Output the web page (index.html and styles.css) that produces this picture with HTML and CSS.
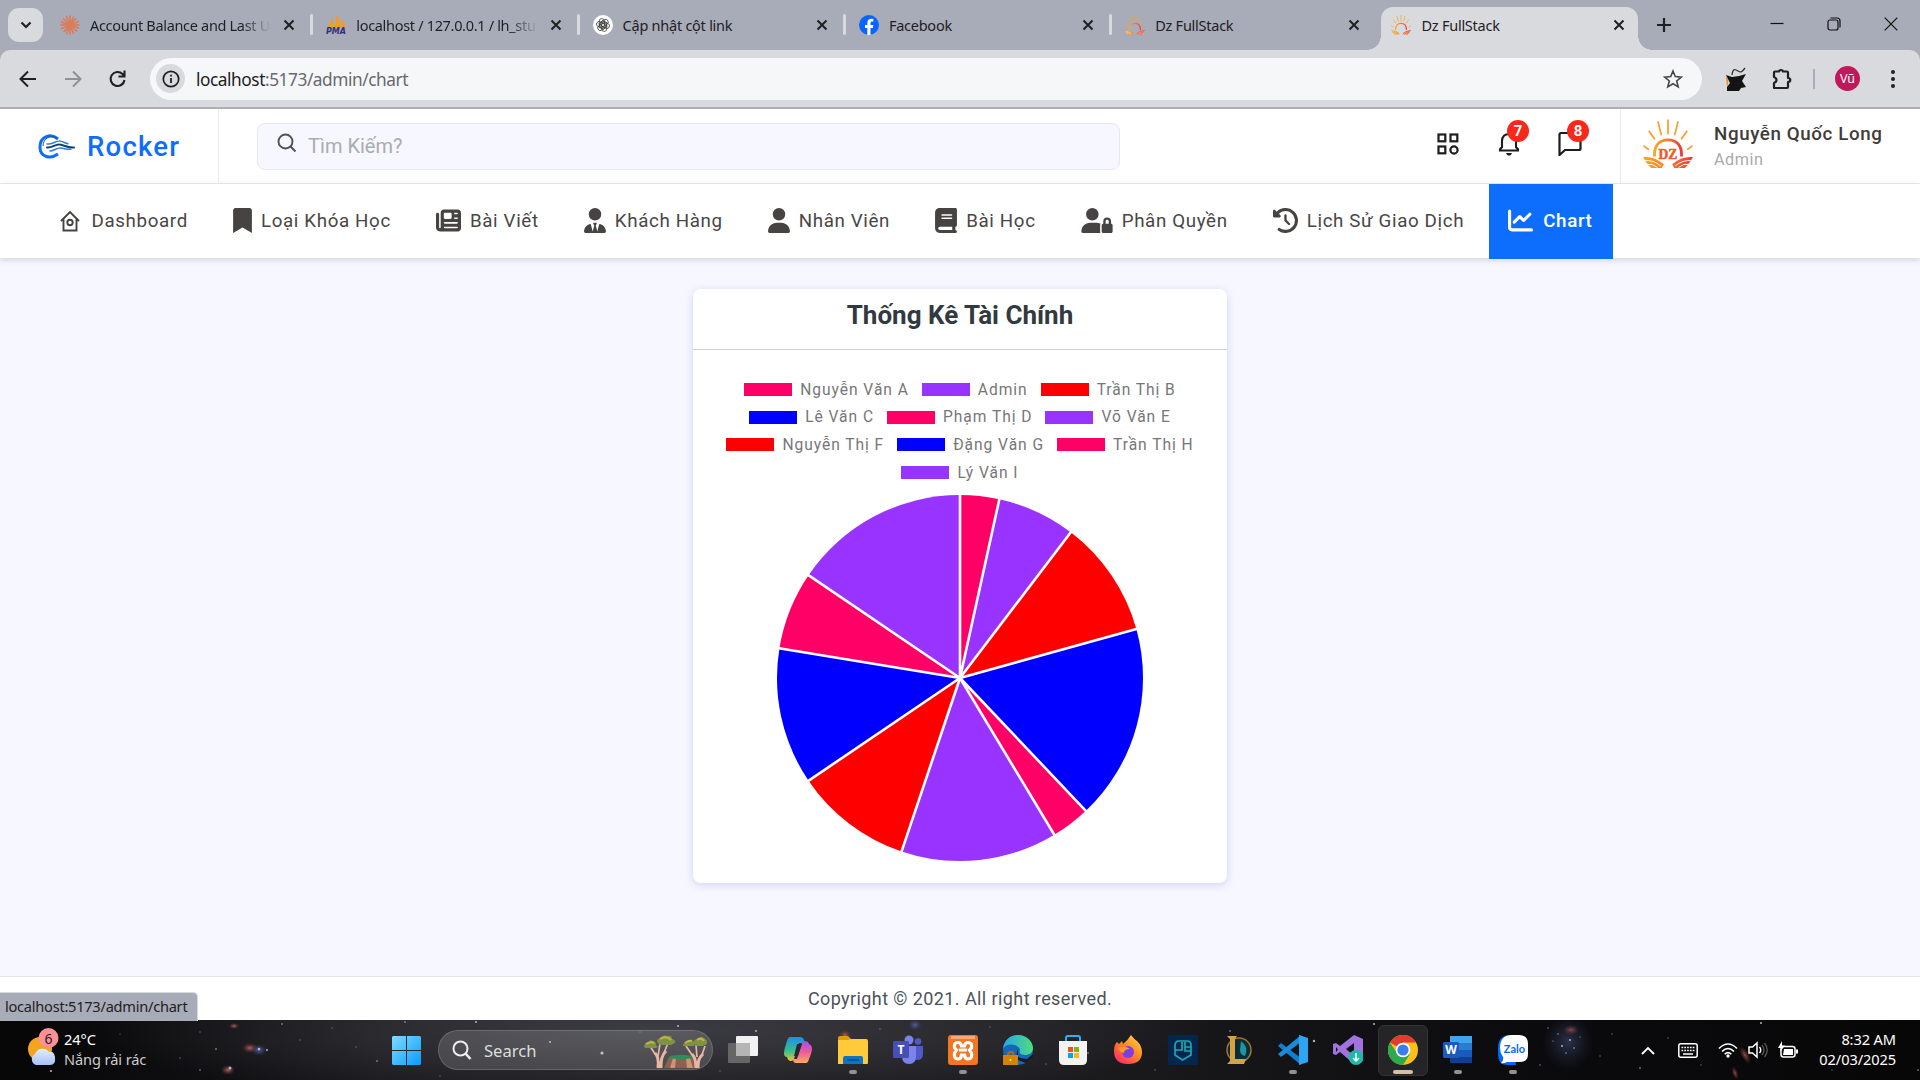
FILE: index.html
```html
<!DOCTYPE html>
<html lang="vi">
<head>
<meta charset="utf-8">
<title>Dz FullStack</title>
<link rel="stylesheet" href="styles.css">
</head>
<body>
<svg class="defs" width="0" height="0" aria-hidden="true">
  <defs>
    <linearGradient id="sunrise" x1="0" x2="1"><stop offset="0" stop-color="#fba628"/><stop offset=".5" stop-color="#f57a2c"/><stop offset="1" stop-color="#ee3a3a"/></linearGradient>
    <symbol id="x" viewBox="0 0 12 12"><path d="M1.5 1.5l9 9M10.5 1.5l-9 9" fill="none" stroke="#1f2023" stroke-width="2"/></symbol>
    <symbol id="dz" viewBox="0 0 48 48">
      <g fill="none" stroke="#f9a02c" stroke-width="1.7" stroke-linecap="round"><path d="M24 1v13M14.500 3l3 12M33.500 3l-3 12M6 12l5 7M42 12l-5 7M1 26l4 3M47 26l-4 3"/></g>
      <path d="M11 36C10.500 25 16 20 24 20S37.500 25 37 36" fill="none" stroke="url(#sunrise)" stroke-width="2.800"/>
      <path d="M0 36.500q11-1 20 7l-2 3.500H8q-4-3-8-10.500zM48 36.500q-11-1-20 7l2 3.500h10q4-3 8-10.500z" fill="url(#sunrise)"/>
      <path d="M1 40q9-1 16 5M3 43.500q6-1 11 3M47 40q-9-1-16 5M45 43.500q-6-1-11 3" fill="none" stroke="#fff" stroke-width=".9"/>
    </symbol>
  </defs>
</svg>

<header class="browser">
  <div class="tabs">
    <button class="tab-search"><svg width="12" height="8" viewBox="0 0 12 8"><path d="M1.500 1.500L6 6l4.500-4.500" fill="none" stroke="#1f2023" stroke-width="2.200"/></svg></button>
    <div class="tab">
      <svg class="fav" viewBox="0 0 20 20"><g stroke="#dd7a58" stroke-width="1.600" stroke-linecap="round"><path d="M10 1v18M1 10h18M3.500 4l13 12M16 3.500L4 16.500M6.500 1.500l7 17M13.500 2l-7 16.500M1.500 7l17 6M18.500 6.500l-17 7"/></g></svg>
      <span class="tab-title fade">Account Balance and Last U</span><svg class="close"><use href="#x"/></svg>
    </div>
    <div class="tab">
      <svg class="fav" viewBox="0 0 20 20"><path d="M2 12Q5 8 6 2q2 6 1 10zM8 12q3-6 2-13 5 6 4 13zM15 12q1-5 0-9 4 5 4 9z" fill="#f59a23"/><text x="0" y="18.500" class="pma">PMA</text></svg>
      <span class="tab-title fade">localhost / 127.0.0.1 / lh_stu</span><svg class="close"><use href="#x"/></svg>
    </div>
    <div class="tab">
      <svg class="fav" viewBox="0 0 20 20"><circle cx="10" cy="10" r="10" fill="#fff"/><g fill="none" stroke="#333" stroke-width=".75"><rect id="k" x="6.200" y="3.600" width="5.200" height="9.500" rx="2.600"/><use href="#k" transform="rotate(60 10 10)"/><use href="#k" transform="rotate(120 10 10)"/><use href="#k" transform="rotate(180 10 10)"/><use href="#k" transform="rotate(240 10 10)"/><use href="#k" transform="rotate(300 10 10)"/></g></svg>
      <span class="tab-title">Cập nhật cột link</span><svg class="close"><use href="#x"/></svg>
    </div>
    <div class="tab">
      <svg class="fav" viewBox="0 0 20 20"><circle cx="10" cy="10" r="10" fill="#0866ff"/><path d="M8.300 20v-7H6v-3h2.300V8.300c0-3.200 1.700-4.600 4.200-4.600l1.900.2v2.700h-1.300c-1.200 0-1.600.6-1.600 1.600V10h2.800l-.5 3h-2.300v7z" fill="#fff"/></svg>
      <span class="tab-title">Facebook</span><svg class="close"><use href="#x"/></svg>
    </div>
    <div class="tab last">
      <svg class="fav"><use href="#dz"/></svg>
      <span class="tab-title">Dz FullStack</span><svg class="close"><use href="#x"/></svg>
    </div>
    <div class="tab active">
      <svg class="fav"><use href="#dz"/></svg>
      <span class="tab-title">Dz FullStack</span><svg class="close"><use href="#x"/></svg>
    </div>
    <svg class="new-tab" width="14" height="14" viewBox="0 0 14 14"><path d="M7 0v14M0 7h14" stroke="#1f2023" stroke-width="2.200"/></svg>
    <div class="win-controls">
      <svg width="14" height="14" viewBox="0 0 14 14"><path d="M.5 6.500h13" stroke="#111" stroke-width="1.200"/></svg>
      <svg width="14" height="14" viewBox="0 0 14 14"><g fill="none" stroke="#111" stroke-width="1.200"><rect x="1" y="3" width="10" height="10" rx="2"/><path d="M3.500 1h6.500q3 0 3 3v6.500"/></g></svg>
      <svg width="14" height="14" viewBox="0 0 14 14"><path d="M.7.7l12.600 12.600M13.300.7L.7 13.300" stroke="#111" stroke-width="1.200"/></svg>
    </div>
  </div>
  <div class="toolbar">
    <svg class="tb" viewBox="0 0 20 20"><path d="M18 10H3M10 2.500L2.500 10l7.500 7.500" fill="none" stroke="#1f2023" stroke-width="2"/></svg>
    <svg class="tb" viewBox="0 0 20 20"><path d="M2 10h15M10 2.500l7.500 7.500-7.500 7.500" fill="none" stroke="#909196" stroke-width="2"/></svg>
    <svg class="tb" viewBox="0 0 20 20"><path d="M16.500 11a7 7 0 1 1-2-6l2 2M16.500 1.500v6h-6" fill="none" stroke="#1f2023" stroke-width="2.100"/></svg>
    <div class="omnibox">
      <span class="info"><svg width="18" height="18" viewBox="0 0 18 18"><circle cx="9" cy="9" r="7.700" fill="none" stroke="#1f2023" stroke-width="1.700"/><path d="M9 8v5M9 4.800v1.800" stroke="#1f2023" stroke-width="1.800"/></svg></span>
      <span class="url"><b>localhost</b>:5173/admin/chart</span>
      <svg class="star" width="20" height="20" viewBox="0 0 20 20"><path d="M10 2l2.300 5.600 6 .5-4.600 3.900 1.500 5.900-5.200-3.200-5.200 3.200L6.300 12 1.700 8.100l6-.5z" fill="none" stroke="#44474c" stroke-width="1.600"/></svg>
    </div>
    <svg class="ext-cat" width="24" height="26" viewBox="0 0 24 26"><path d="M2 10q4 4 1 11z" fill="#f08a1d"/><path d="M2 9l6 2 7-1 7-2-4 7 4 6-5 1-2 3H3v-4l3-4z" fill="#141414"/><path d="M8 9c1-7 3-6 6-4s4 1 7-3" fill="none" stroke="#333" stroke-width="1.300"/></svg>
    <svg class="ext" width="22" height="22" viewBox="0 0 22 22"><path d="M3 4.500q0-1 1-1h4q.3-1.500 2-1.500t2 1.500h4q1 0 1 1V10q2.300.2 2.300 2T17 14v5q0 1-1 1H3v-5q2.500-1 2.500-3T3 9z" fill="none" stroke="#1f2023" stroke-width="2.200" stroke-linejoin="round"/></svg>
    <i class="tb-sep"></i>
    <span class="profile">Vũ</span>
    <svg class="kebab" width="4" height="18" viewBox="0 0 4 18"><g fill="#1f2023"><circle cx="2" cy="2" r="2"/><circle cx="2" cy="9" r="2"/><circle cx="2" cy="16" r="2"/></g></svg>
  </div>
</header>

<main class="page">
  <div class="topbar">
    <div class="brand">
      <svg width="38" height="26" viewBox="0 0 38 26"><path d="M20 6C13 0 2 3 2 14s11 12 18 7" fill="none" stroke="#0d6efd" stroke-width="3"/><path d="M19 5C12 1 5 6 5 13" fill="none" stroke="#1c4f96" stroke-width="1"/><g fill="none" stroke-linecap="round"><path d="M9 11c5 1 8-3 12-3 4-.3 6 2.500 9 2.800" stroke="#3b7fd0" stroke-width="1.500"/><path d="M9 14.500c5 .5 8-3 12-3s8 3.500 15 3" stroke="#16406f" stroke-width="2"/><path d="M12 18c4 0 6-3 10-3s7 2 11 1" stroke="#2a7fe8" stroke-width="1.600"/></g></svg>
      <span>Rocker</span>
    </div>
    <div class="search">
      <svg width="20" height="20" viewBox="0 0 20 20"><circle cx="8.500" cy="8.500" r="7" fill="none" stroke="#4c5258" stroke-width="1.900"/><path d="M13.500 13.500l5 5" stroke="#4c5258" stroke-width="2"/></svg>
      <span>Tìm Kiếm?</span>
    </div>
    <div class="actions">
      <svg width="22" height="22" viewBox="0 0 22 22"><g fill="none" stroke="#1d1d1f" stroke-width="2.200"><rect x="1.500" y="1.500" width="6.800" height="6.800"/><rect x="13.500" y="1.500" width="6.800" height="6.800"/><rect x="1.500" y="13.500" width="6.800" height="6.800"/><circle cx="17" cy="17" r="3.600"/></g></svg>
      <div class="notify"><svg width="22" height="25" viewBox="0 0 22 25"><path d="M2 19.500v-1.300l2-2.200V10c0-4.500 3-7 7-7s7 2.500 7 7v6l2 2.200v1.300z" fill="none" stroke="#1d1d1f" stroke-width="2.100"/><path d="M8 22h6q-.7 2.700-3 2.700T8 22z" fill="#1d1d1f"/></svg><span class="badge">7</span></div>
      <div class="notify"><svg width="24" height="25" viewBox="0 0 24 25"><path d="M1.500 24V3.500q0-1.500 1.500-1.500h18q1.500 0 1.500 1.500v14q0 1.500-1.500 1.500H7z" fill="none" stroke="#1d1d1f" stroke-width="2.200"/></svg><span class="badge">8</span></div>
    </div>
    <div class="user">
      <div class="avatar"><svg width="50" height="50" viewBox="0 0 48 48"><use href="#dz"/><text x="24" y="38.500" class="dz-text">DZ</text></svg></div>
      <div><p class="name">Nguyễn Quốc Long</p><p class="role">Admin</p></div>
    </div>
  </div>

  <nav class="menu">
    <a class="home"><svg width="20" height="22" viewBox="0 0 20 22"><g fill="none" stroke="#474343" stroke-width="1.900"><path d="M1 11l9-9 9 9M3.500 9v11.500h13V9"/><circle cx="10" cy="12.500" r="2.700"/></g></svg>Dashboard</a>
    <a><svg width="19" height="25" viewBox="0 0 384 512"><path d="M0 48v464l192-112 192 112V48c0-26-22-48-48-48H48C22 0 0 22 0 48z"/></svg>Loại Khóa Học</a>
    <a><svg width="25" height="25" viewBox="0 0 512 512"><path d="M96 96c0-35 29-64 64-64h288c35 0 64 29 64 64v320c0 35-29 64-64 64H80c-44 0-80-36-80-80V128c0-18 14-32 32-32s32 14 32 32v272c0 9 7 16 16 16s16-7 16-16zm64 24v80c0 13 11 24 24 24h112c13 0 24-11 24-24v-80c0-13-11-24-24-24H184c-13 0-24 11-24 24zm208-8c0 9 7 16 16 16h48a16 16 0 0 0 0-32h-48c-9 0-16 7-16 16zm0 96c0 9 7 16 16 16h48a16 16 0 0 0 0-32h-48c-9 0-16 7-16 16zM160 304c0 9 7 16 16 16h256a16 16 0 0 0 0-32H176c-9 0-16 7-16 16zm0 96c0 9 7 16 16 16h256a16 16 0 0 0 0-32H176c-9 0-16 7-16 16z" fill-rule="evenodd"/></svg>Bài Viết</a>
    <a><svg width="22" height="25" viewBox="0 0 448 512"><path d="M96 128a128 128 0 1 0 256 0 128 128 0 1 0-256 0zM209 359l-19-31c-6-11 2-24 14-24h40c12 0 20 13 14 24l-19 31 33 124 36-146c2-8 10-14 18-11 70 17 122 81 122 156 0 17-14 30-30 30H30c-16 0-30-14-30-30 0-75 52-139 122-156 8-2 16 3 18 11l36 146z"/></svg>Khách Hàng</a>
    <a><svg width="22" height="25" viewBox="0 0 448 512"><path d="M224 256a128 128 0 1 0 0-256 128 128 0 1 0 0 256zm-46 48C80 304 0 384 0 482c0 16 14 30 30 30h388c16 0 30-14 30-30 0-98-80-178-178-178z"/></svg>Nhân Viên</a>
    <a><svg width="22" height="25" viewBox="0 0 448 512"><path d="M96 0C43 0 0 43 0 96v320c0 53 43 96 96 96h320a32 32 0 0 0 0-64v-64c18 0 32-14 32-32V32c0-18-14-32-32-32zm0 384h256v64H96a32 32 0 0 1 0-64zm32-240c0-9 7-16 16-16h192a16 16 0 0 1 0 32H144c-9 0-16-7-16-16zm16 48h192a16 16 0 0 1 0 32H144a16 16 0 0 1 0-32z" fill-rule="evenodd"/></svg>Bài Học</a>
    <a><svg width="32" height="25" viewBox="0 0 640 512"><path d="M224 256a128 128 0 1 0 0-256 128 128 0 1 0 0 256zm-46 48C80 304 0 384 0 482c0 16 14 30 30 30h362c-5-9-8-20-8-32V352c0-18 8-28 10-30-32-12-64-18-124-18zM528 240c18 0 32 14 32 32v48h-64v-48c0-18 14-32 32-32zm-80 32v48c-18 0-32 14-32 32v128c0 18 14 32 32 32h160c18 0 32-14 32-32V352c0-18-14-32-32-32v-48a80 80 0 0 0-160 0z"/></svg>Phân Quyền</a>
    <a><svg width="25" height="25" viewBox="0 0 512 512"><path d="M75 75L41 41C26 26 0 36 0 58v110c0 13 11 24 24 24h110c22 0 32-26 17-41l-30-31a192 192 0 1 1 26 293 32 32 0 1 0-37 53A256 256 0 1 0 75 75zm181 53c-13 0-24 11-24 24v104c0 6 3 13 7 17l72 72a24 24 0 0 0 34-34l-65-65v-94c0-13-11-24-24-24z"/></svg>Lịch Sử Giao Dịch</a>
    <a class="on"><svg width="25" height="25" viewBox="0 0 512 512"><path d="M64 64a32 32 0 1 0-64 0v336c0 44 36 80 80 80h400a32 32 0 1 0 0-64H80c-9 0-16-7-16-16zm407 87a32 32 0 0 0-46-46L320 211l-57-58a32 32 0 0 0-46 0L105 265a32 32 0 0 0 46 46l89-90 57 58c13 12 33 12 46 0z"/></svg>Chart</a>
  </nav>

  <section class="content">
    <article class="card">
      <h1>Thống Kê Tài Chính</h1>
      <div class="chart">
        <ul class="legend">
          <li class="pink">Nguyễn Văn A</li><li class="purple">Admin</li><li class="red">Trần Thị B</li>
        </ul>
        <ul class="legend">
          <li class="blue">Lê Văn C</li><li class="pink">Phạm Thị D</li><li class="purple">Võ Văn E</li>
        </ul>
        <ul class="legend">
          <li class="red">Nguyễn Thị F</li><li class="blue">Đặng Văn G</li><li class="pink">Trần Thị H</li>
        </ul>
        <ul class="legend">
          <li class="purple">Lý Văn I</li>
        </ul>
        <svg class="pie" width="370" height="370" viewBox="-185 -185 370 370">
          <g transform="rotate(-90)">
            <path fill="#ff0066" d="M0 0L183 0A183 183 0 0 1 178.720 39.330z"/>
            <path fill="#9933ff" d="M0 0L178.720 39.330A183 183 0 0 1 145.690 110.740z"/>
            <path fill="#ff0000" d="M0 0L145.690 110.740A183 183 0 0 1 48.970 176.330z"/>
            <path fill="#0000ff" d="M0 0L48.970 176.330A183 183 0 0 1 -132.850 125.850z"/>
            <path fill="#ff0066" d="M0 0L-132.850 125.850A183 183 0 0 1 -156.810 94.330z"/>
            <path fill="#9933ff" d="M0 0L-156.810 94.330A183 183 0 0 1 -173.420 -58.430z"/>
            <path fill="#ff0000" d="M0 0L-173.420 -58.430A183 183 0 0 1 -102.700 -151.460z"/>
            <path fill="#0000ff" d="M0 0L-102.700 -151.460A183 183 0 0 1 29.610 -180.590z"/>
            <path fill="#ff0066" d="M0 0L29.610 -180.590A183 183 0 0 1 102.700 -151.460z"/>
            <path fill="#9933ff" d="M0 0L102.700 -151.460A183 183 0 0 1 183 0z"/>
            <g stroke="#fff" stroke-width="2.600">
              <path d="M0 0H185"/><path d="M0 0H185" transform="rotate(12.410)"/><path d="M0 0H185" transform="rotate(37.240)"/><path d="M0 0H185" transform="rotate(74.480)"/><path d="M0 0H185" transform="rotate(136.550)"/><path d="M0 0H185" transform="rotate(148.970)"/><path d="M0 0H185" transform="rotate(198.620)"/><path d="M0 0H185" transform="rotate(235.860)"/><path d="M0 0H185" transform="rotate(279.310)"/><path d="M0 0H185" transform="rotate(304.140)"/>
            </g>
          </g>
        </svg>
      </div>
    </article>
  </section>
  <footer class="footer">Copyright © 2021. All right reserved.</footer>
  <div class="status">localhost:5173/admin/chart</div>
</main>

<div class="taskbar">
  <svg class="sky" width="1920" height="60" viewBox="0 0 1920 60">
    <defs>
      <radialGradient id="haze"><stop offset="0" stop-color="#46464e"/><stop offset="1" stop-color="#46464e" stop-opacity="0"/></radialGradient>
      <radialGradient id="neb"><stop offset="0" stop-color="#56609a"/><stop offset="1" stop-color="#303660" stop-opacity="0"/></radialGradient>
      <radialGradient id="rose"><stop offset="0" stop-color="#a8625f"/><stop offset="1" stop-color="#803030" stop-opacity="0"/></radialGradient>
    </defs>
    <ellipse cx="650" cy="10" rx="560" ry="75" fill="url(#haze)" opacity=".8"/>
    <ellipse cx="1568" cy="22" rx="26" ry="28" fill="url(#neb)" opacity=".45"/>
    <ellipse cx="1571" cy="10" rx="8" ry="5" fill="url(#rose)" opacity=".7"/><ellipse cx="1745" cy="35" rx="4" ry="10" fill="url(#rose)" opacity=".8" transform="rotate(-30 1745 35)"/><ellipse cx="1735" cy="53" rx="3" ry="7" fill="url(#rose)" opacity=".8" transform="rotate(-20 1735 53)"/>
    <ellipse cx="250" cy="28" rx="8" ry="5" fill="url(#rose)"/><ellipse cx="228" cy="50" rx="7" ry="5" fill="url(#rose)"/><ellipse cx="234" cy="6" rx="5" ry="3" fill="url(#rose)"/><ellipse cx="259" cy="30" rx="8" ry="6" fill="url(#neb)"/><ellipse cx="845" cy="15" rx="6" ry="5" fill="url(#rose)"/><ellipse cx="915" cy="5" rx="7" ry="6" fill="url(#neb)"/>
    <g fill="#aeb2cc"><circle cx="51" cy="51" r="1"/><circle cx="230" cy="48" r="1.500"/><circle cx="259" cy="29" r="1.300"/><circle cx="267" cy="30" r="1"/><circle cx="282" cy="4" r=".8"/><circle cx="476" cy="2" r="1"/><circle cx="550" cy="22" r="1"/><circle cx="602" cy="33" r="1.600"/><circle cx="678" cy="6" r="1"/><circle cx="756" cy="11" r="1"/><circle cx="377" cy="41" r=".8"/><circle cx="200" cy="50" r=".7"/><circle cx="405" cy="2" r=".8"/><circle cx="1314" cy="21" r="1.200"/><circle cx="1374" cy="4" r="1"/><circle cx="1230" cy="11" r=".8"/><circle cx="1088" cy="33" r=".8"/><circle cx="1562" cy="26" r="1"/><circle cx="1570" cy="20" r="1"/><circle cx="1574" cy="28" r=".8"/><circle cx="1566" cy="33" r=".7"/><circle cx="1558" cy="14" r=".7"/><circle cx="1553" cy="21" r=".6"/><circle cx="1580" cy="17" r=".6"/><circle cx="1761" cy="3" r="1"/><circle cx="1640" cy="48" r=".8"/><circle cx="1918" cy="50" r=".8"/></g>
    <g fill="#6f7390"><circle cx="200" cy="12" r=".7"/><circle cx="216" cy="29" r="1"/><circle cx="300" cy="20" r=".7"/><circle cx="332" cy="8" r=".7"/><circle cx="180" cy="38" r=".7"/><circle cx="120" cy="14" r=".6"/><circle cx="356" cy="27" r=".7"/><circle cx="440" cy="56" r=".7"/><circle cx="505" cy="30" r=".7"/><circle cx="640" cy="12" r=".7"/><circle cx="720" cy="51" r=".7"/><circle cx="880" cy="9" r=".8"/><circle cx="990" cy="7" r=".7"/><circle cx="1046" cy="44" r=".7"/><circle cx="1155" cy="50" r=".7"/><circle cx="1600" cy="36" r=".7"/><circle cx="1540" cy="45" r=".8"/><circle cx="1548" cy="8" r=".8"/><circle cx="1612" cy="14" r=".7"/><circle cx="1668" cy="18" r=".7"/><circle cx="1701" cy="45" r=".7"/><circle cx="1832" cy="50" r=".7"/></g>
  </svg>
  <div class="weather">
    <svg width="32" height="40" viewBox="0 0 32 40"><defs><linearGradient id="cl" y2="1" x2="0"><stop stop-color="#e4ecfd"/><stop offset="1" stop-color="#a6c2f5"/></linearGradient></defs><circle cx="12" cy="21" r="12" fill="#f2a51f"/><path d="M8 37a6 6 0 0 1-1-11 8 8 0 0 1 14-2q5-1 6 5 1 8-5 8z" fill="url(#cl)"/><circle cx="20.500" cy="10" r="10" fill="#ff9096"/><text x="20.500" y="15.500" text-anchor="middle" class="wnum">6</text></svg>
    <p><b>24°C</b><br>Nắng rải rác</p>
  </div>
  <svg class="start" width="29" height="29" viewBox="0 0 29 29"><defs><linearGradient id="win" x2="1" y2="1"><stop stop-color="#7ddcff"/><stop offset="1" stop-color="#0a9bff"/></linearGradient></defs><path d="M1 0h13v14H0V1zM15 0h13l1 1v13H15zM0 15h14v14H1l-1-1zM15 15h14v13l-1 1H15z" fill="url(#win)"/></svg>
  <div class="task-search">
    <svg width="20" height="20" viewBox="0 0 20 20"><circle cx="8.500" cy="8.500" r="7" fill="none" stroke="#eee" stroke-width="2"/><path d="M13.500 13.500l5 5.500" stroke="#eee" stroke-width="2.600"/></svg>
    <span>Search</span>
    <svg class="trees" width="64" height="34" viewBox="0 0 64 34"><path d="M25 22h25l4 11H20z" fill="#8a6252"/><path d="M29 23h3l-1 10h-5zM42 23h4l3 10h-6z" fill="#c99576"/><ellipse cx="37" cy="22" rx="12" ry="2.200" fill="#2f8a5c"/><g fill="none" stroke="#e9b6a4"><path d="M14 33c1-8 0-12-3-15M17 33c0-9 1-13 5-17M52 33c0-8-1-11-4-14M54 33c0-8 1-10 5-14" stroke-width="3"/><path d="M11 19l-5-8M14 22l2-14M20 18l4-10M48 20l-6-9M53 22l-1-12M58 20l3-9" stroke-width="1.700"/></g><g fill="#7f9142"><path d="M0 12q0-4 4-4 2-4 5-2 4 1 3 4 3 2 0 3H2zM13 7q0-4 4-4 2-4 6-2 5-1 5 3 4 1 3 4l-4 2H16zM39 11q0-4 4-4 3-3 6-1 3 2 1 5H41zM50 8q-1-4 4-4 3-4 6-1 4 2 3 6l-4 2h-7z"/></g><path d="M16 4q6-4 11 1M41 8q4-3 7-2M53 5q4-3 7 1M2 9q4-3 8-1" stroke="#c0b44c" stroke-width="2" fill="none"/></svg>
  </div>
  <div class="apps">
    <div class="app"><svg viewBox="0 0 30 30"><rect x="8" y="1" width="22" height="20" rx="1" fill="#f1f1f1"/><rect y="8" width="22" height="20" rx="1" fill="#666"/><path d="M8 8h14v13H8z" fill="#b5b5b5"/></svg></div>
    <div class="app"><svg viewBox="0 0 30 30"><defs><linearGradient id="c1" y2="1" x2="0"><stop stop-color="#1b8ee8"/><stop offset=".6" stop-color="#3cc08a"/><stop offset="1" stop-color="#f2c52c"/></linearGradient><linearGradient id="c2" y2="1" x2="0"><stop stop-color="#a050f0"/><stop offset=".5" stop-color="#ee5a9c"/><stop offset="1" stop-color="#ffab5c"/></linearGradient></defs><path d="M7 2h10q3 0 4 3l1 3h-6l-5 16q-1 2-3 2-3 0-4-4-3 0-3-4 0-3 3-12 1-4 3-4z" fill="url(#c1)"/><path d="M23 28H13q-3 0-3-4h4l5-16q1-2 3-2 3 0 4 3 3 1 3 5 0 3-3 10-1 4-3 4z" fill="url(#c2)"/><path d="M14 9h5l-4 12h-4z" fill="#2b2530"/></svg></div>
    <div class="app run"><svg viewBox="0 0 30 30"><path d="M0 3q0-2 2-2h8l4 4H0z" fill="#e09a13"/><path d="M0 5h10l3-1h15q2 0 2 2v22q0 1-1 1H0z" fill="#ffcb3a"/><path d="M5 29v-6q0-2 2-2h16q2 0 2 2v6z" fill="#0f74c4"/><path d="M9 25h12" stroke="#0a4c8f" stroke-width="1.500"/></svg></div>
    <div class="app"><svg viewBox="0 0 30 30"><circle cx="16" cy="5" r="4.500" fill="#7b83eb"/><circle cx="25" cy="6.500" r="3.300" fill="#5059c9"/><path d="M20 11h10v8q0 6-6 6-4 0-4-4z" fill="#5059c9"/><path d="M9 11h14v10q0 8-7 8t-7-8z" fill="#7b83eb"/><rect y="6" width="16" height="17" rx="1.500" fill="#464eb8"/><text x="8" y="19" class="appletter">T</text></svg></div>
    <div class="app run"><svg viewBox="0 0 30 30"><rect width="30" height="30" rx="3" fill="#f37623"/><path d="M3 1h24v3H3z" fill="#f9a873"/><path d="M10 7.500q3 0 3.500 3.500h3q.5-3.500 3.500-3.500 4.500 0 3.500 5.500l-2 2 2 3q1 6-3.500 6-3 0-3.500-4h-3q-.5 4-3.500 4-4.500 0-3.500-6l2-3-2-2q-1-5.500 3.500-5.500z" fill="#f37623" stroke="#fff" stroke-width="3.200"/><path d="M11 15h8" stroke="#fff" stroke-width="3"/></svg></div>
    <div class="app"><svg viewBox="0 0 30 30"><defs><linearGradient id="ed" x2="1"><stop stop-color="#2aa5e8"/><stop offset="1" stop-color="#4edc7d"/></linearGradient></defs><circle cx="15" cy="15" r="15" fill="#1468b8"/><path d="M0 14C1 5 7 0 15 0c9 0 15 7 15 13 0 5-4 7-8 7-5 0-6-2-5-5 0-5-13-9-17-1z" fill="url(#ed)"/><path d="M15 14q-5 10 9 10l6-5v3l-7 6-8-3z" fill="#171b22"/><rect y="20" width="15" height="10" fill="#d18408"/><path d="M5 20q0-3 3-3t2 3" fill="none" stroke="#b36b06" stroke-width="2"/><circle cx="7.500" cy="25" r="1" fill="#ffe79a"/></svg></div>
    <div class="app"><svg viewBox="0 0 30 30"><path d="M8 7V3q0-2 2-2h10q2 0 2 2v4" fill="none" stroke="#32aef0" stroke-width="2"/><path d="M1 6h28v19q0 5-5 5H6q-5 0-5-5z" fill="#f3f3f3"/><path d="M10 12h5v5h-5z" fill="#f25022"/><path d="M16 12h5v5h-5z" fill="#7fba00"/><path d="M10 18h5v5h-5z" fill="#00a4ef"/><path d="M16 18h5v5h-5z" fill="#ffb900"/></svg></div>
    <div class="app"><svg viewBox="0 0 30 30"><defs><linearGradient id="ff" x1="1" x2=".2" y2="1"><stop stop-color="#ffe14a"/><stop offset=".5" stop-color="#ff8a24"/><stop offset="1" stop-color="#ff2a68"/></linearGradient></defs><path d="M18 0q3 4 6 6 5 5 5 11 0 12-14 12T1 16q0-6 3-9l2 2 3-3 1 3q5-4 8-9z" fill="url(#ff)"/><circle cx="15" cy="17" r="6" fill="#7a3fe0"/><path d="M5 13q7-3 12 1-6 0-6 4-5-1-6-5z" fill="#ff9a2a"/></svg></div>
    <div class="app"><svg viewBox="0 0 30 30"><rect width="30" height="30" fill="#04264c"/><path d="M7 11v9l7.500 5 8.500-5V10q0-4-4-4H11q-4 0-4 5zM7 15h7V7M17 7v9h6M17 12h6" fill="none" stroke="#18aab4" stroke-width="1.700"/></svg></div>
    <div class="app"><svg viewBox="0 0 30 30"><circle cx="16" cy="15" r="12" fill="#0b2d36" stroke="#a3752c" stroke-width="1.500"/><path d="M18 6q8 6 4 15-5-1-5-6z" fill="#1d96a0"/><path d="M4 1h10l-2 3v20h11l-2 5H4l3-3V4z" fill="#d6a247"/></svg></div>
    <div class="app run"><svg viewBox="0 0 30 30"><path d="M0 11l3-3 20 15v7z" fill="#0f7fd0"/><path d="M0 19l3 3L23 7V0z" fill="#1a8ada"/><path d="M21 0l9 3v24l-9 3z" fill="#2fa5f2"/></svg></div>
    <div class="app"><svg viewBox="0 0 30 30"><path d="M21 0l9 4v21l-9 4L7 17l-4 3-3-1V9l3-1 4 3zM3 12v5l2-2.500zm18-4l-8 6 8 7z" fill="#a272df" fill-rule="evenodd"/><circle cx="23" cy="22.500" r="7.500" fill="#1fb8a8"/><path d="M23 18v8m-3-3l3 3 3-3" fill="none" stroke="#fff" stroke-width="1.500"/></svg></div>
    <div class="app run focus"><svg viewBox="0 0 30 30"><circle cx="15" cy="15" r="15" fill="#fbc116"/><path d="M15 15L2 7.500A15 15 0 0 1 28 7.500H15z" fill="#e33b2e"/><path d="M2 7.500A15 15 0 0 0 15 30l7-11-13-1z" fill="#2da94f"/><circle cx="15" cy="15" r="7.300" fill="#fff"/><circle cx="15" cy="15" r="5.600" fill="#3b7ded"/></svg></div>
    <div class="app run"><svg viewBox="0 0 30 30"><path d="M7 1h22v7H7z" fill="#41a5ee"/><path d="M7 8h22v7H7z" fill="#2b7cd3"/><path d="M7 15h22v7H7z" fill="#185abd"/><path d="M7 22h22v6H7z" fill="#103f91"/><rect y="7" width="16" height="16" rx="1.500" fill="#1b5bbf"/><text x="8" y="19" class="appletter">W</text></svg></div>
    <div class="app run"><svg viewBox="0 0 30 30"><path d="M13 0Q0 0 0 13v7q0 10 10 10h8z" fill="#0068ff"/><path d="M14 0h7q9 0 9 9v10q0 8-8 8H9q-4 2-6 1 3-3 2-6Q2 18 2 13 2 0 14 0z" fill="#fff"/><text x="16.500" y="18" class="zalo">Zalo</text></svg></div>
  </div>
  <div class="tray">
    <svg width="14" height="9" viewBox="0 0 14 9"><path d="M1 8l6-6 6 6" fill="none" stroke="#fff" stroke-width="1.900"/></svg>
    <svg width="20" height="15" viewBox="0 0 20 15"><rect x=".8" y=".8" width="18.400" height="13.400" rx="2" fill="none" stroke="#fff" stroke-width="1.500"/><path d="M3.500 4.500h13M3.500 7.500h13" stroke="#fff" stroke-width="1.700" stroke-dasharray="1.700 1.100"/><path d="M5 11h10" stroke="#fff" stroke-width="1.500"/></svg>
    <svg width="20" height="16" viewBox="0 0 20 16"><g fill="none" stroke="#fff" stroke-width="1.600"><path d="M1 6.500q9-9 18 0M4 9.500q6-6 12 0M6.700 12.300q3.300-3.300 6.600 0"/></g><circle cx="10" cy="14" r="1.700" fill="#fff"/></svg>
    <svg width="20" height="18" viewBox="0 0 20 18"><path d="M1 6h3.500L9 2v14l-4.500-4H1z" fill="none" stroke="#fff" stroke-width="1.500"/><path d="M11.500 6q2.500 3 0 6" fill="none" stroke="#fff" stroke-width="1.400"/><path d="M14 4q4 5 0 10M16.500 2q5.500 7 0 14" fill="none" stroke="#555" stroke-width="1.300"/></svg>
    <svg width="20" height="18" viewBox="0 0 20 18"><rect x="3" y="5.500" width="14" height="10.500" rx="2.500" fill="none" stroke="#fff" stroke-width="1.500"/><path d="M6 8h9v6H5z" fill="#fff"/><path d="M18 8.500h2v4h-2zM4 0L0 7h3l-1 4 5-6.500H4z" fill="#fff"/></svg>
    <p class="clock">8:32 AM<br>02/03/2025</p>
  </div>
</div>
</body>
</html>
```
FILE: styles.css
```css
* { box-sizing: border-box; }
body { margin: 0; width: 1920px; height: 1080px; overflow: hidden; display: flex; flex-direction: column; font-family: Roboto, "Noto Sans", sans-serif; color: #4c4c4c; }
p, h1, ul { margin: 0; padding: 0; }
svg { display: block; flex: none; }
.defs { position: absolute; }

.browser { height: 109px; background: #a8abb8; border-bottom: 2px solid #b0adb3; font-family: "Noto Sans", sans-serif; flex: none; }
.tabs { height: 50px; display: flex; align-items: stretch; }
.tab-search { width: 35px; height: 34px; margin: 8px 3px 0 8px; border: 0; border-radius: 11px; background: #d9dade; display: grid; place-items: center; padding: 0; }
.tab { width: 266.3px; display: flex; align-items: center; padding: 0 17px 0 14px; position: relative; }
.tab:not(.last):not(.active)::after { content: ""; position: absolute; right: -1px; top: 14px; width: 3px; height: 21px; border-radius: 2px; background: #d9dade; }
.fav { width: 20px; height: 20px; }
.tab-title { flex: 1; min-width: 0; margin-left: 10px; white-space: nowrap; font-size: 14.5px; letter-spacing: -.25px; color: #1f2023; line-height: 24px; }
.fade { margin-right: 12px; letter-spacing: -.32px; -webkit-mask-image: linear-gradient(90deg, #000 84%, transparent); mask-image: linear-gradient(90deg, #000 84%, transparent); }
.close { width: 12px; height: 12px; }
.pma { font: italic bold 8px "DejaVu Sans", sans-serif; fill: #2f3276; }
.active { width: 257px; margin: 7px 0 0 4px; padding: 0 13px 7px 10px; background: #d9dade; border-radius: 12px 12px 0 0; }
.active::before, .active::after { content: ""; position: absolute; bottom: 0; width: 14px; height: 14px; }
.active::before { left: -14px; background: radial-gradient(circle at 0 0, transparent 13.5px, #d9dade 14px); }
.active::after { right: -14px; background: radial-gradient(circle at 100% 0, transparent 13.5px, #d9dade 14px); }
.new-tab { margin: 18px 0 0 19px; }
.win-controls { margin: 17px 22px 0 auto; display: flex; gap: 43px; }
.toolbar { height: 57px; background: #d9dade; border-radius: 10px 10px 0 0; display: flex; align-items: center; padding-left: 18px; }
.tb { width: 20px; height: 20px; margin-right: 25px; }
.omnibox { width: 1552px; height: 42px; margin-left: -3px; border-radius: 21px; background: #f6f7f9; display: flex; align-items: center; padding: 0 19px 0 6px; }
.info { width: 29px; height: 29px; border-radius: 50%; background: #d9dade; display: grid; place-items: center; }
.url { margin: 1px 0 0 11px; font-size: 17.3px; letter-spacing: -.45px; color: #66696e; }
.url b { font-weight: 400; color: #1f2023; }
.star { margin-left: auto; }
.ext-cat { margin-left: 22px; }
.ext { margin-left: 23px; }
.tb-sep { width: 2px; height: 20px; margin: 0 20px 0 20px; background: #a8abb8; }
.profile { width: 25px; height: 25px; border-radius: 50%; background: #c2185b; color: #fff; font-size: 12.5px; display: grid; place-items: center; }
.kebab { margin-left: 31px; }

.page { flex: 1; background: #f7f7ff; display: flex; flex-direction: column; position: relative; min-height: 0; }
.topbar { height: 75px; background: #fff; border-bottom: 1px solid #ebebee; display: flex; align-items: center; flex: none; }
.brand { width: 219px; height: 100%; border-right: 1px solid #ebebee; display: flex; align-items: center; gap: 11px; padding-left: 38px; color: #0d6efd; font-size: 27.5px; font-weight: 500; letter-spacing: 1.25px; }
.search { width: 863px; height: 47px; margin: 1px 0 0 38px; border: 1px solid #e6e6f5; border-radius: 8px; background: #f7f7ff; display: flex; align-items: center; gap: 11px; padding-left: 19px; font-size: 20px; color: #aaacb0; }
.search svg { margin-top: -7px; }
.search span { margin-top: -1px; }
.actions { display: flex; gap: 38px; align-items: center; margin: -5px 38px 0 auto; }
.actions > svg { margin-right: 1px; }
.notify { position: relative; }
.badge { position: absolute; left: 9px; top: -11px; width: 22px; height: 22px; border-radius: 50%; background: #f8281a; color: #fff; font-size: 15px; font-weight: 700; display: grid; place-items: center; }
.user { width: 300px; height: 100%; border-left: 1px solid #ebebee; display: flex; gap: 21px; padding: 11px 0 0 22px; white-space: nowrap; }
.avatar { margin-top: -1px; }
.name { font-size: 18.75px; font-weight: 500; letter-spacing: .6px; line-height: 26px; margin-top: 1px; color: #413c3a; }
.role { font-size: 16.25px; letter-spacing: .5px; line-height: 26px; color: #aaa; }
.dz-text { font: bold 13px "Liberation Serif", serif; fill: #ee5a2a; stroke: #ee5a2a; stroke-width: .5px; text-anchor: middle; }

.menu { height: 74px; background: #fff; box-shadow: 0 2px 6px rgba(80, 80, 110, .22); display: flex; gap: 7.1px; padding-left: 41px; flex: none; z-index: 1; }
.menu a { display: flex; align-items: center; gap: 9px; padding: 0 19px; font-size: 18.75px; letter-spacing: .63px; color: #4a4645; white-space: nowrap; }
.menu svg { fill: #474343; margin-top: -1px; }
.menu .home { gap: 12px; padding-left: 18.5px; }
.menu .on { height: 75px; padding-bottom: 1px; margin-left: -1px; background: #0d6efd; color: #fff; font-weight: 500; gap: 10px; padding-right: 20px; }
.menu .on svg { fill: #fff; }

.content { flex: 1; display: flex; justify-content: center; align-items: flex-start; padding-top: 31px; }
.card { width: 534px; height: 594px; background: #fff; border-radius: 8px; box-shadow: 0 2px 8px rgba(200, 200, 245, .8); }
.card h1 { height: 61px; border-bottom: 1px solid #cfcfd2; text-align: center; font-size: 26px; font-weight: 700; line-height: 52px; color: #32393f; }
.chart { display: flex; flex-direction: column; align-items: center; padding-top: 26px; }
.legend { list-style: none; display: flex; gap: 13px; height: 27.6px; align-items: center; font-size: 15.6px; letter-spacing: .95px; color: #777; white-space: nowrap; }
.legend li { display: flex; align-items: center; gap: 8px; }
.legend li::before { content: ""; width: 48px; height: 13px; background: currentColor; }
.pink::before { background: #f06 !important; }
.purple::before { background: #93f !important; }
.red::before { background: red !important; }
.blue::before { background: blue !important; }
.pie { margin-top: 6.4px; }
.footer { height: 44px; border-top: 1px solid #e4e4e4; background: #fff; text-align: center; font-size: 18px; letter-spacing: .41px; line-height: 44px; color: #4c5258; flex: none; }
.status { position: absolute; left: 0; bottom: -1px; z-index: 3; width: 198px; height: 29px; padding-left: 5px; border-radius: 0 5px 0 0; background: #a8abb8; font: 14.6px/26px "Noto Sans", sans-serif; letter-spacing: -.25px; color: #1f2023; border: solid #d9dade; border-width: 1px 1px 0 0; }

.taskbar { height: 60px; background: linear-gradient(90deg, #060607, #17171a 20%, #1c1c1f 55%, #0b0b0d 80%, #070708); position: relative; display: flex; align-items: center; color: #fff; font-family: "Noto Sans", sans-serif; flex: none; }
.sky { position: absolute; left: 0; top: 0; }
.taskbar > :not(.sky) { position: relative; }
.weather { display: flex; width: 392px; padding-left: 28px; gap: 4px; }
.weather svg { margin-top: -3px; }
.weather p { font-size: 14.6px; line-height: 20px; color: #ccc; letter-spacing: -.1px; margin-top: -2px; }
.weather b { font-weight: 400; color: #fff; }
.wnum { font: 14px "Noto Sans", sans-serif; fill: #222; }
.task-search { width: 275px; height: 40px; margin-left: 17px; border: 1px solid rgba(255, 255, 255, .16); border-radius: 20px; background: rgba(255, 255, 255, .15); display: flex; align-items: center; padding: 0 4px 0 13px; gap: 12px; font-size: 16.6px; color: #ddd; }
.trees { margin: 4px 0 0 auto; }
.apps { display: flex; margin-left: 2px; }
.app { width: 55px; height: 60px; display: grid; place-items: center; position: relative; }
.app > svg { width: 30px; height: 30px; position: relative; z-index: 1; }
.run::after { content: ""; position: absolute; bottom: 6px; left: 24px; width: 8px; height: 4px; border-radius: 2px; background: #929294; }
.focus::before { content: ""; position: absolute; left: 3px; top: 5px; width: 48px; height: 49px; border-radius: 6px; border: 1px solid #333336; background: #252527; }
.focus::after { left: 18px; width: 20px; background: #d5bfa9; }
.appletter { font: bold 12px "Open Sans", sans-serif; fill: #fff; text-anchor: middle; }
.zalo { font: bold 11px Lato, sans-serif; fill: #0a66f0; text-anchor: middle; }
.tray { margin: 0 24px 0 auto; display: flex; align-items: center; }
.tray svg:nth-child(1) { margin-right: 23px; }
.tray svg:nth-child(2) { margin-right: 20px; }
.tray svg:nth-child(3) { margin-right: 10px; }
.tray svg:nth-child(4) { margin-right: 10px; }
.clock { width: 98px; text-align: right; font-size: 14.6px; line-height: 20px; letter-spacing: -.1px; margin-top: -2px; }
```
